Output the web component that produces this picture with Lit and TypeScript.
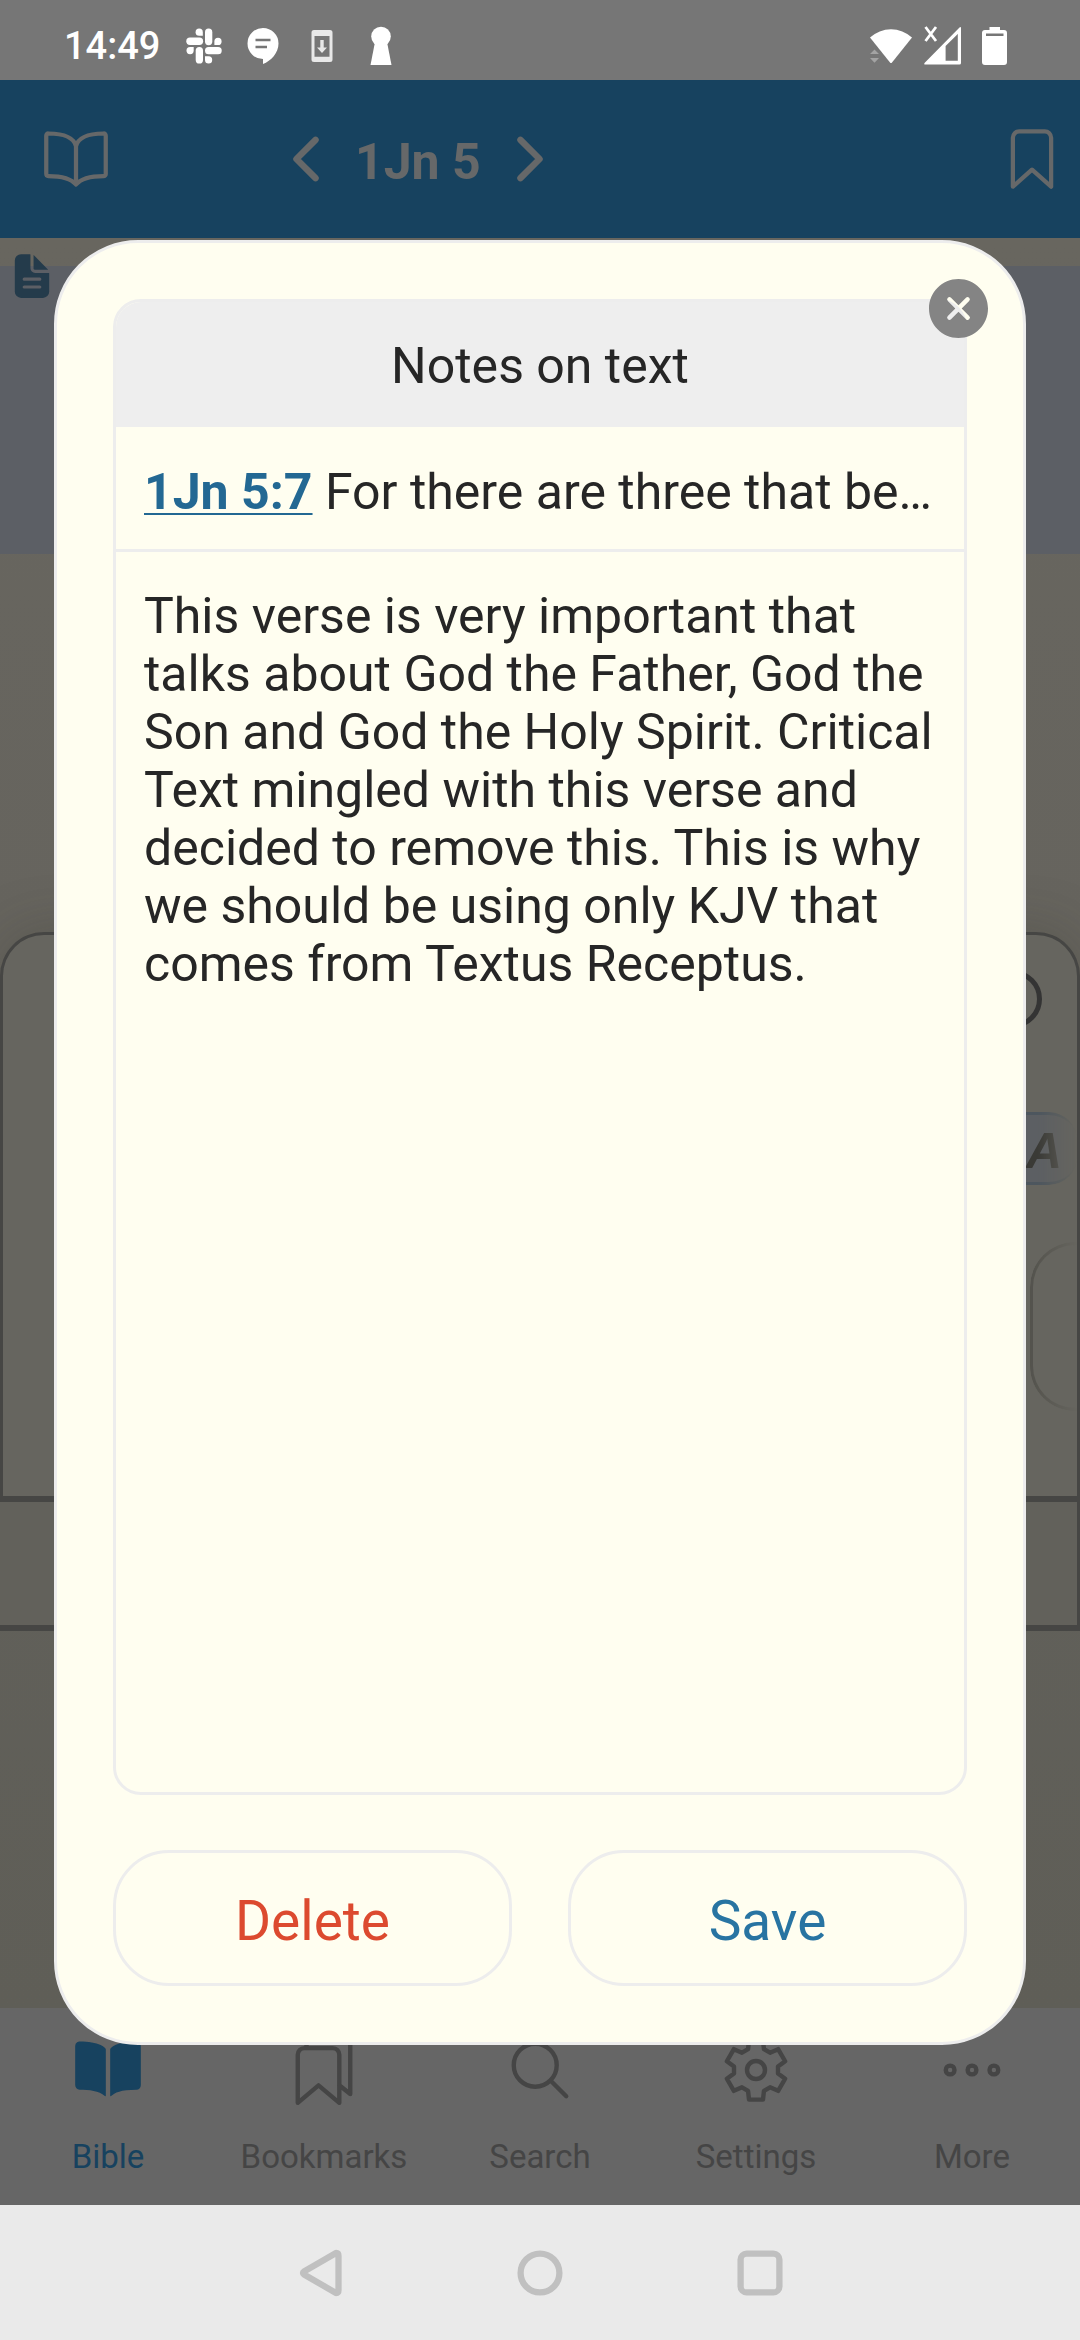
import { LitElement, html, css, svg } from "lit";
import { customElement } from "lit/decorators.js";
import { classMap } from "lit/directives/class-map.js";

const line = (body: unknown, width = 32) => html`
  <svg class="icon" viewBox="0 0 512 512" fill="none" stroke="currentColor" stroke-width=${width}
    stroke-linecap="round" stroke-linejoin="round" aria-hidden="true">${body}</svg>`;

const solid = (body: unknown) => html`
  <svg class="icon" viewBox="0 0 512 512" fill="currentColor" aria-hidden="true">${body}</svg>`;

const bookOutline = line(svg`<path d="M256 160c16-63.16 76.43-95.41 208-96a15.94 15.94 0 0116 16v288a16 16 0 01-16 16c-128 0-177.45 25.81-208 64-30.37-38-80-64-208-64-9.88 0-16-8.05-16-17.93V80a15.94 15.94 0 0116-16c131.57.59 192 32.84 208 96zM256 160v288"/>`);
const bookSolid = solid(svg`<path d="M202.24 74C166.11 56.75 115.61 48.3 48 48a31.36 31.36 0 00-17.92 5.33A32 32 0 0016 79.9V366c0 19.34 13.76 33.93 32 33.93 71.07 0 142.36 6.64 185.06 47a4.11 4.11 0 006.94-3V106.82a15.89 15.89 0 00-5.46-12A143 143 0 00202.24 74zM481.92 53.3A31.33 31.33 0 00464 48c-67.61.3-118.11 8.71-154.24 26a143.31 143.31 0 00-32.31 20.78 15.93 15.93 0 00-5.45 12v337.13a3.93 3.93 0 006.68 2.81c25.67-25.5 70.72-46.82 185.36-46.81a32 32 0 0032-32v-288a32 32 0 00-14.12-26.61z"/>`);
const chevronLeft = line(svg`<path d="M328 112L184 256l144 144"/>`, 48);
const chevronRight = line(svg`<path d="M184 112l144 144-144 144"/>`, 48);
const bookmark = line(svg`<path d="M352 48H160a48 48 0 00-48 48v368l144-128 144 128V96a48 48 0 00-48-48z"/>`);
const bookmarks = line(svg`<path d="M128 80V64a48.14 48.14 0 0148-48h224a48.14 48.14 0 0148 48v368l-80-64M320 96H112a48.14 48.14 0 00-48 48v352l152-128 152 128V144a48.14 48.14 0 00-48-48z"/>`);
const search = line(svg`<path d="M221.09 64a157.09 157.09 0 10157.09 157.09A157.1 157.1 0 00221.09 64zM338.29 338.29L448 448"/>`);
const more = line(svg`<circle cx="96" cy="256" r="32"/><circle cx="256" cy="256" r="32"/><circle cx="416" cy="256" r="32"/>`);
const documentText = solid(svg`<path d="M428 224H288a48 48 0 01-48-48V36a4 4 0 00-4-4h-92a64 64 0 00-64 64v320a64 64 0 0064 64h224a64 64 0 0064-64V228a4 4 0 00-4-4zm-92 160H176a16 16 0 010-32h160a16 16 0 010 32zm0-80H176a16 16 0 010-32h160a16 16 0 010 32z"/><path d="M419.22 188.59L275.41 44.78a2 2 0 00-3.41 1.41V176a16 16 0 0016 16h129.81a2 2 0 001.41-3.41z"/>`);

// Six-toothed gear: a valley on every 60 degrees, a tooth halfway between.
const gearPoints = Array.from({ length: 6 }, (_, k) => {
  const turn = (x: number, y: number, deg: number) => {
    const a = (deg * Math.PI) / 180;
    return `${(x * Math.cos(a) - y * Math.sin(a)).toFixed(2)},${(x * Math.sin(a) + y * Math.cos(a)).toFixed(2)}`;
  };
  return [
    turn(22, -3.5, k * 60),
    turn(22, 3.5, k * 60),
    turn(29.6, -7, k * 60 + 30),
    turn(29.6, 7, k * 60 + 30),
  ].join(" ");
}).join(" ");

const gear = html`
  <svg class="icon" viewBox="-35 -35 70 70" fill="none" stroke="currentColor" stroke-width="4.4"
    stroke-linejoin="round" aria-hidden="true">
    ${svg`<polygon points=${gearPoints}/><circle r="9"/>`}
  </svg>`;

const tabs = [
  { label: "Bible", icon: bookSolid, active: true },
  { label: "Bookmarks", icon: bookmarks, active: false },
  { label: "Search", icon: search, active: false },
  { label: "Settings", icon: gear, active: false },
  { label: "More", icon: more, active: false },
];

@customElement("status-bar")
class StatusBar extends LitElement {
  static styles = css`
    :host {
      display: flex;
      align-items: center;
      justify-content: space-between;
      height: 68px;
      padding: 12px 63px 0 64px;
      background: #767676;
      color: #fff;
    }
    .group { display: flex; align-items: center; }
    .left { gap: 19px; }
    .right { gap: 8px; }
    .time { width: 101px; font-size: 38px; line-height: 40px; font-weight: 500; }
    .small { width: 40px; height: 40px; }
    .wide { width: 44px; height: 40px; }
  `;
  render() {
    return html`
      <div class="group left">
        <span class="time">14:49</span>
        <svg class="small" viewBox="0 0 40 40" fill="currentColor" aria-hidden="true">
          <path d="M18.8 9.8h-3.6a3.6 3.6 0 1 1 3.6-3.6z"/>
          <rect x="21" y="2.6" width="7.3" height="16.6" rx="3.6"/>
          <rect x="2.3" y="11.5" width="16.8" height="7.5" rx="3.7"/>
          <path d="M30.4 19v-3.6a3.6 3.6 0 1 1 3.6 3.6z"/>
          <path d="M9.7 21v3.6A3.6 3.6 0 1 1 6.1 21z"/>
          <rect x="11.7" y="21" width="7.3" height="16.5" rx="3.6"/>
          <rect x="21" y="21" width="16.7" height="7.3" rx="3.6"/>
          <path d="M21 30.3h3.6a3.6 3.6 0 1 1-3.6 3.6z"/>
        </svg>
        <svg class="small" viewBox="0 0 40 40" aria-hidden="true">
          <path d="M20 2a15.5 15.5 0 0 0 0 31v5c8-3 15.5-11 15.5-20.5A15.5 15.5 0 0 0 20 2z" fill="currentColor"/>
          <path d="M12.5 14h15M12.5 21H24" stroke="#767676" stroke-width="2.6"/>
        </svg>
        <svg class="small" viewBox="0 0 40 40" fill="#e8e8e8" aria-hidden="true">
          <path fill-rule="evenodd" d="M12 4h16a2.5 2.5 0 0 1 2.5 2.5v27A2.5 2.5 0 0 1 28 36H12a2.5 2.5 0 0 1-2.5-2.5v-27A2.5 2.5 0 0 1 12 4zm.5 6v20.7h15V10z"/>
          <path d="M18.3 14h3.4v7.5H25l-5 5.5-5-5.5h3.3z"/>
        </svg>
        <svg class="small" viewBox="0 0 40 40" fill="currentColor" aria-hidden="true">
          <circle cx="20" cy="10.5" r="9.8"/>
          <path d="M14 16h12l4.5 23h-21z"/>
        </svg>
      </div>
      <div class="group right">
        <svg class="wide" viewBox="0 0 44 40" fill="currentColor" aria-hidden="true">
          <path d="M1 11.5a31 31 0 0 1 42 0L23 36.5q-1 1-2 0z"/>
          <path d="M1 28l4.5-4.5L10 28zM1 32l4.5 4.8L10 32z" fill="#a3a3a3"/>
        </svg>
        <svg class="wide" viewBox="0 0 44 40" fill="currentColor" aria-hidden="true">
          <path fill-rule="evenodd" d="M38.5 1.5q1.5-1 1.5.5v35q0 1.5-1.5 1.5H4q-1.5 0-.5-1.5zM24.6 20v14.7h12.2V8z"/>
          <path d="M4.5 1l10.5 14M15 1L4.5 15" stroke="currentColor" stroke-width="2.8"/>
        </svg>
        <svg class="wide" viewBox="0 0 44 40" fill="currentColor" aria-hidden="true">
          <path fill-rule="evenodd" d="M16.5 1H27v3h4q3 0 3 3v29q0 3-3 3H12q-3 0-3-3V7q0-3 3-3h4.5zM13 7.5V10h17.5V7.5z"/>
        </svg>
      </div>
    `;
  }
}

@customElement("note-dialog")
class NoteDialog extends LitElement {
  static styles = css`
    :host {
      position: relative;
      display: flex;
      flex-direction: column;
      flex: 1;
      gap: 55px;
      min-width: 0;
      box-sizing: border-box;
      padding: 56px;
      border: 3px solid #ededed;
      border-radius: 84px;
      background: #fffef0;
      color: #262626;
    }
    .card {
      display: flex;
      flex-direction: column;
      flex: 1;
      box-sizing: border-box;
      border: 3px solid #ededed;
      border-radius: 28px;
      overflow: hidden;
    }
    .title {
      margin: 0;
      padding: 35px 28px 32px;
      background: #eee;
      font-size: 50px;
      line-height: 58px;
      font-weight: 400;
      text-align: center;
    }
    .verse {
      margin: 0;
      padding: 36px 28px 28px;
      border-bottom: 3px solid #ededed;
      font-size: 50px;
      line-height: 58px;
      white-space: nowrap;
      overflow: hidden;
    }
    .link {
      color: #236893;
      font-weight: 700;
      text-decoration: underline;
      text-decoration-thickness: 2px;
      text-underline-offset: 4px;
      text-decoration-skip-ink: none;
    }
    .note {
      display: block;
      flex: 1;
      box-sizing: border-box;
      width: 100%;
      margin: 0;
      padding: 35px 25px 28px 28px;
      border: 0;
      outline: 0;
      resize: none;
      overflow: hidden;
      background: transparent;
      color: inherit;
      font-family: inherit;
      font-size: 50px;
      line-height: 58px;
    }
    .actions { display: grid; grid-template-columns: 1fr 1fr; gap: 56px; }
    .action {
      height: 136px;
      padding: 6px 0 0;
      border: 3px solid #ededed;
      border-radius: 56px;
      background: transparent;
      font-family: inherit;
      font-size: 55px;
      line-height: 64px;
    }
    .delete { color: #dc4a2f; }
    .save { color: #2874a2; }
    .close {
      position: absolute;
      top: 36px;
      right: 35px;
      width: 59px;
      height: 59px;
      padding: 0;
      border: 0;
      border-radius: 50%;
      background: none;
      color: #848484;
    }
    .close svg { display: block; width: 100%; height: 100%; }
  `;
  render() {
    return html`
      <section class="card">
        <h1 class="title" id="note-title">Notes on text</h1>
        <p class="verse"><a class="link" href="#1jn-5-7">1Jn 5:7</a> For there are three that be…</p>
        <textarea class="note" aria-labelledby="note-title" spellcheck="false" .value=${
          "This verse is very important that talks about God the Father, God the Son and God the Holy Spirit. Critical Text mingled with this verse and decided to remove this. This is why we should be using only KJV that comes from Textus Receptus."
        }></textarea>
      </section>
      <div class="actions">
        <button class="action delete" type="button">Delete</button>
        <button class="action save" type="button">Save</button>
      </div>
      <button class="close" type="button" aria-label="Close">
        <svg viewBox="48 48 416 416" fill="currentColor" aria-hidden="true">
          <path d="M256 48C141.31 48 48 141.31 48 256s93.31 208 208 208 208-93.31 208-208S370.69 48 256 48zm75.31 260.69a16 16 0 11-22.62 22.62L256 278.63l-52.69 52.68a16 16 0 01-22.62-22.62L233.37 256l-52.68-52.69a16 16 0 0122.62-22.62L256 233.37l52.69-52.68a16 16 0 0122.62 22.62L278.63 256z"/>
        </svg>
      </button>
    `;
  }
}

@customElement("app-root")
class AppRoot extends LitElement {
  static styles = css`
    :host {
      position: relative;
      display: flex;
      flex-direction: column;
      min-height: 100vh;
      background: #64625c;
      font-family: Roboto, "Liberation Sans", sans-serif;
    }
    .icon { display: block; width: 68px; height: 68px; }
    button { padding: 0; border: 0; background: none; color: inherit; font: inherit; }
    .header {
      display: flex;
      align-items: center;
      height: 158px;
      padding: 0 14px 0 42px;
      box-sizing: border-box;
      background: #17425f;
      color: #666869;
    }
    .pager { display: flex; align-items: center; gap: 15px; margin-left: 162px; }
    .chapter { margin: 0; padding-top: 6px; font-size: 50px; line-height: 58px; font-weight: 700; }
    .bookmark { margin-left: auto; }

    .page {
      display: flex;
      flex-direction: column;
      flex: 1;
      overflow: hidden;
      padding-top: 28px;
      background: linear-gradient(#68665f, #66645e 40%, #61605a 70%, #5f5e57);
    }
    .passage { height: 272px; padding: 0 7px 16px; background: #5c5f65; }
    .passage-mark { width: 50px; margin-top: -15px; color: #243b4b; }
    .passage-mark .icon { width: 50px; height: 50px; }

    .panel {
      display: flex;
      flex-direction: column;
      align-items: flex-end;
      height: 570px;
      margin-top: 378px;
      box-sizing: border-box;
      padding-top: 35px;
      border: 3px solid #464644;
      border-bottom-width: 6px;
      border-radius: 44px 44px 0 0;
      background: #66655f;
      box-shadow: 0 0 56px rgba(50, 50, 40, 0.25);
    }
    .ring {
      width: 58px;
      height: 58px;
      margin-right: 35px;
      box-sizing: border-box;
      border: 5px solid #343434;
      border-radius: 50%;
    }
    .badge {
      width: 110px;
      height: 73px;
      margin-top: 84px;
      padding-left: 59px;
      box-sizing: border-box;
      border: solid #4d565e;
      border-width: 3px 0;
      border-radius: 0 28px 28px 0;
      background: #5c5f63;
      color: #3a3a36;
      font-family: "Liberation Sans", sans-serif;
      font-size: 50px;
      line-height: 72px;
      font-weight: 700;
      font-style: italic;
      -webkit-mask-image: linear-gradient(90deg, #000 64%, transparent);
      mask-image: linear-gradient(90deg, #000 64%, transparent);
    }
    .option {
      width: 47px;
      height: 169px;
      margin-top: 57px;
      box-sizing: border-box;
      border: 3px solid #54534d;
      border-right: 0;
      border-radius: 45px 0 0 45px;
      -webkit-mask-image: linear-gradient(90deg, #000, transparent);
      mask-image: linear-gradient(90deg, #000, transparent);
    }
    .panel-foot {
      height: 123px;
      border: solid #464644;
      border-width: 0 3px 6px 0;
      background: #62615b;
    }

    .tabs {
      display: grid;
      grid-template-columns: repeat(5, 1fr);
      height: 197px;
      background: #666;
      color: #454545;
    }
    .tab {
      display: flex;
      flex-direction: column;
      align-items: center;
      gap: 32px;
      padding-top: 27px;
      font-size: 33px;
      line-height: 40px;
    }
    .tab .icon { width: 70px; height: 70px; }
    .tab.active { color: #17425f; }

    .system {
      display: flex;
      align-items: center;
      justify-content: center;
      gap: 172px;
      height: 135px;
      background: #eaeaea;
      color: #c0c0c0;
    }
    .system svg { display: block; width: 48px; height: 48px; }

    .overlay {
      position: absolute;
      inset: 80px 0 135px;
      display: flex;
      padding: 160px 54px;
    }
  `;
  render() {
    return html`
      <status-bar></status-bar>
      <header class="header">
        <button type="button" aria-label="Books">${bookOutline}</button>
        <div class="pager">
          <button type="button" aria-label="Previous chapter">${chevronLeft}</button>
          <h2 class="chapter">1Jn 5</h2>
          <button type="button" aria-label="Next chapter">${chevronRight}</button>
        </div>
        <button class="bookmark" type="button" aria-label="Bookmark">${bookmark}</button>
      </header>
      <main class="page">
        <div class="passage"><div class="passage-mark">${documentText}</div></div>
        <div class="panel">
          <div class="ring"></div>
          <div class="badge">A</div>
          <div class="option"></div>
        </div>
        <div class="panel-foot"></div>
      </main>
      <nav class="tabs">
        ${tabs.map(
          (tab) => html`
            <button class=${classMap({ tab: true, active: tab.active })} type="button">
              ${tab.icon}<span>${tab.label}</span>
            </button>
          `
        )}
      </nav>
      <div class="system">
        <button type="button" aria-label="Back">
          <svg viewBox="-24 -24 48 48" fill="none" stroke="currentColor" stroke-width="6.3" stroke-linejoin="round">
            <path d="M16 -20L-16 -1.5Q-18 0 -16 1.5L16 20Q18.500 20 18.500 17V-17Q18.500 -20 16 -20z"/>
          </svg>
        </button>
        <button type="button" aria-label="Home">
          <svg viewBox="-24 -24 48 48" fill="none" stroke="currentColor" stroke-width="6.3">
            <circle r="19.4"/>
          </svg>
        </button>
        <button type="button" aria-label="Recent apps">
          <svg viewBox="-24 -24 48 48" fill="none" stroke="currentColor" stroke-width="6.3">
            <rect x="-19.4" y="-19.4" width="38.8" height="38.8" rx="6"/>
          </svg>
        </button>
      </div>
      <div class="overlay"><note-dialog role="dialog" aria-label="Notes on text"></note-dialog></div>
    `;
  }
}
